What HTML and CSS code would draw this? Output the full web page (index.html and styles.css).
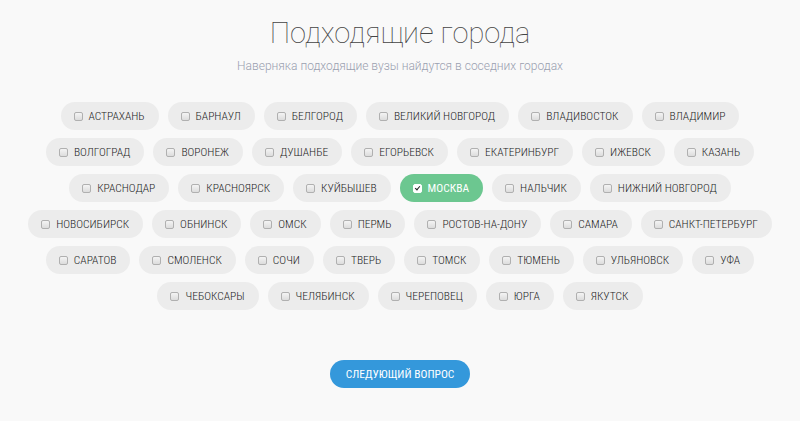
FILE: index.html
```html
<!DOCTYPE html>
<html lang="ru">
<head>
    <meta charset="UTF-8">
    <meta name="viewport" content="width=device-width, initial-scale=1.0">
    <title>Подходящие города</title>
    <link rel="stylesheet" href="styles.css">
</head>
<body>
    <!-- Header -->
    <div class="header">
        <h1>Подходящие города</h1>
        <p class="subtitle">Наверняка подходящие вузы найдутся в соседних городах</p>
    </div>

    <!-- City list -->
    <div class="cities">
        <div class="row">
            <label class="city"><span class="box"></span>Астрахань</label>
            <label class="city"><span class="box"></span>Барнаул</label>
            <label class="city"><span class="box"></span>Белгород</label>
            <label class="city"><span class="box"></span>Великий Новгород</label>
            <label class="city"><span class="box"></span>Владивосток</label>
            <label class="city"><span class="box"></span>Владимир</label>
        </div>
        <div class="row">
            <label class="city"><span class="box"></span>Волгоград</label>
            <label class="city"><span class="box"></span>Воронеж</label>
            <label class="city"><span class="box"></span>Душанбе</label>
            <label class="city"><span class="box"></span>Егорьевск</label>
            <label class="city"><span class="box"></span>Екатеринбург</label>
            <label class="city"><span class="box"></span>Ижевск</label>
            <label class="city"><span class="box"></span>Казань</label>
        </div>
        <div class="row">
            <label class="city"><span class="box"></span>Краснодар</label>
            <label class="city"><span class="box"></span>Красноярск</label>
            <label class="city"><span class="box"></span>Куйбышев</label>
            <label class="city checked"><span class="box"></span>Москва</label>
            <label class="city"><span class="box"></span>Нальчик</label>
            <label class="city"><span class="box"></span>Нижний Новгород</label>
        </div>
        <div class="row">
            <label class="city"><span class="box"></span>Новосибирск</label>
            <label class="city"><span class="box"></span>Обнинск</label>
            <label class="city"><span class="box"></span>Омск</label>
            <label class="city"><span class="box"></span>Пермь</label>
            <label class="city"><span class="box"></span>Ростов-на-Дону</label>
            <label class="city"><span class="box"></span>Самара</label>
            <label class="city"><span class="box"></span>Санкт-Петербург</label>
        </div>
        <div class="row">
            <label class="city"><span class="box"></span>Саратов</label>
            <label class="city"><span class="box"></span>Смоленск</label>
            <label class="city"><span class="box"></span>Сочи</label>
            <label class="city"><span class="box"></span>Тверь</label>
            <label class="city"><span class="box"></span>Томск</label>
            <label class="city"><span class="box"></span>Тюмень</label>
            <label class="city"><span class="box"></span>Ульяновск</label>
            <label class="city"><span class="box"></span>Уфа</label>
        </div>
        <div class="row">
            <label class="city"><span class="box"></span>Чебоксары</label>
            <label class="city"><span class="box"></span>Челябинск</label>
            <label class="city"><span class="box"></span>Череповец</label>
            <label class="city"><span class="box"></span>Юрга</label>
            <label class="city"><span class="box"></span>Якутск</label>
        </div>
    </div>

    <!-- Next button -->
    <div class="actions">
        <button class="next">Следующий вопрос</button>
    </div>
</body>
</html>
```

FILE: styles.css
```css
body {
    margin: 0;
    background-color: #f9f9f9;
    font-family: Roboto, "Liberation Sans", sans-serif;
    color: #333;
    text-align: center;
}

/* Header */
.header {
    padding-top: 14px;
}

h1 {
    margin: 0;
    font-size: 29px;
    font-weight: 100;
    line-height: 38px;
    color: #444;
}

.subtitle {
    margin: 7px 0 0;
    font-size: 12px;
    font-weight: 300;
    color: #9aa0b0;
}

/* City pills */
.cities {
    display: flex;
    flex-direction: column;
    gap: 8px;
    margin-top: 29px;
}

.row {
    display: flex;
    justify-content: center;
    gap: 9px;
}

.city {
    display: flex;
    align-items: center;
    gap: 6px;
    height: 28px;
    padding: 0 14px 0 13px;
    border-radius: 14px;
    background-color: #ececec;
    font-family: "Roboto Condensed", "Liberation Sans", sans-serif;
    font-size: 11.5px;
    font-weight: 300;
    text-transform: uppercase;
    color: #1e1e1e;
    cursor: pointer;
}

/* Fake checkbox */
.box {
    width: 7px;
    height: 7px;
    border: 1px solid #b0b0b0;
    border-radius: 2px;
    background: linear-gradient(#f4f4f4, #dcdcdc);
    position: relative;
}

.checked {
    background-color: #6cc790;
    color: #fff;
    font-weight: 400;
}

.checked .box {
    background: #fff;
    border-color: #fff;
}

.checked .box::after {
    content: "";
    position: absolute;
    left: 2px;
    top: 0px;
    width: 2px;
    height: 4px;
    border: solid #222;
    border-width: 0 1.5px 1.5px 0;
    transform: rotate(40deg);
}

/* Next button */
.actions {
    margin-top: 50px;
}

.next {
    height: 28px;
    padding: 0 16px;
    border: none;
    border-radius: 14px;
    background-color: #3498db;
    color: #fff;
    font-family: "Roboto Condensed", "Liberation Sans", sans-serif;
    font-size: 11.5px;
    text-transform: uppercase;
    cursor: pointer;
}
```
